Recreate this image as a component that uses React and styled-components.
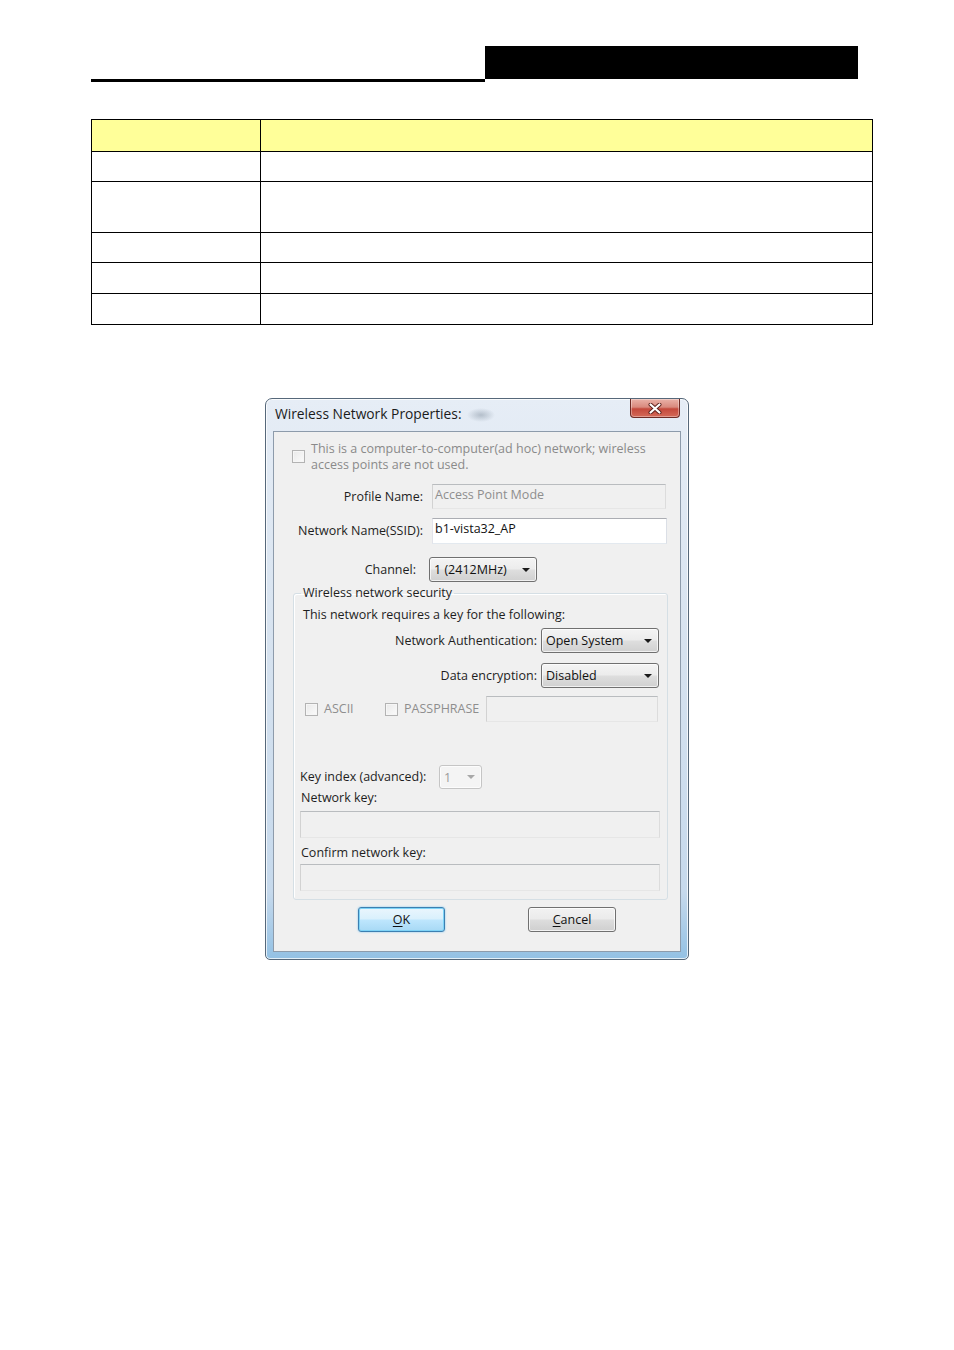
import React from 'react';
import styled, { createGlobalStyle } from 'styled-components';

const GlobalStyle = createGlobalStyle`
  html, body {
    margin: 0;
    padding: 0;
    background: #fff;
  }
  body {
    font-family: "Open Sans", "Noto Sans", "DejaVu Sans", sans-serif;
  }
`;

const Page = styled.div`
  width: 954px;
  height: 1350px;
  padding-top: 46px;
  box-sizing: border-box;
  overflow: hidden;
`;

const Header = styled.div`
  display: flex;
  margin-left: 91px;
`;

const HeaderRule = styled.div`
  width: 394px;
  height: 33px;
  border-bottom: 3px solid #000;
`;

const HeaderTab = styled.div`
  width: 373px;
  height: 33px;
  background: #000;
`;

const Table = styled.div`
  display: grid;
  grid-template-columns: 169px 612px;
  width: 782px;
  margin: 37px 0 0 91px;
  border-top: 1px solid #000;
  border-left: 1px solid #000;
  box-sizing: border-box;
`;

const Cell = styled.div`
  height: ${p => p.$h}px;
  box-sizing: border-box;
  border-right: 1px solid #000;
  border-bottom: 1px solid #000;
  background: ${p => (p.$head ? '#ffff99' : '#fff')};
`;

const Window = styled.div`
  width: 424px;
  height: 562px;
  margin: 73px 0 0 265px;
  box-sizing: border-box;
  border: 1px solid #56687a;
  border-radius: 7px 7px 5px 5px;
  padding: 0 7px 7px;
  background: linear-gradient(180deg, #e6edf6 0%, #d6e2ef 45%, #c6d9ec 88%, #93c1e4 100%);
  box-shadow: inset 0 0 0 1px rgba(255, 255, 255, 0.75);
  display: flex;
  flex-direction: column;
`;

const TitleBar = styled.div`
  height: 32px;
  display: flex;
  justify-content: space-between;
  align-items: flex-start;
  background: radial-gradient(ellipse 14px 7px at 208px 16px, rgba(120, 135, 150, 0.45), rgba(120, 135, 150, 0));
`;

const Title = styled.div`
  margin: 6px 0 0 2px;
  font-size: 13.8px;
  line-height: 18px;
  color: #1b1b1b;
`;

const CloseButton = styled.div`
  width: 50px;
  height: 19px;
  margin-right: 1px;
  box-sizing: border-box;
  border: 1px solid #6e2b25;
  border-top: none;
  border-radius: 0 0 4px 4px;
  background: linear-gradient(180deg, #eab2a8 0%, #d98a7e 45%, #c4493c 55%, #d46a58 100%);
  box-shadow: inset 0 0 0 1px rgba(255, 255, 255, 0.35);
  display: flex;
  align-items: center;
  justify-content: center;
`;

const Client = styled.div`
  height: 521px;
  box-sizing: border-box;
  border: 1px solid #8d9bab;
  background: #f0f0f0;
  display: flex;
  flex-direction: column;
  font-size: 12.5px;
  line-height: 16px;
  color: #1e1e1e;
`;

const AdhocRow = styled.div`
  display: flex;
  margin: 9px 0 0 18px;
  color: #8a8a8a;
`;

const Check = styled.span`
  flex: none;
  width: 13px;
  height: 13px;
  margin: ${p => p.$top || 0}px 6px 0 0;
  box-sizing: border-box;
  border: 1px solid #b3b3b3;
  background: linear-gradient(135deg, #e9e9e9, #fbfbfb);
  box-shadow: inset 0 0 0 1px #f6f6f6;
`;

const FieldRow = styled.div`
  display: flex;
  align-items: center;
  margin-top: ${p => p.$top}px;
`;

const Label = styled.span`
  flex: none;
  width: ${p => p.$w}px;
  margin-right: ${p => p.$gap}px;
  text-align: ${p => p.$align || 'right'};
  white-space: nowrap;
`;

const TextBox = styled.div`
  flex: none;
  width: ${p => p.$w}px;
  height: ${p => p.$h}px;
  margin: ${p => p.$top || 0}px 0 0 ${p => p.$left || 0}px;
  box-sizing: border-box;
  padding: 2px 0 0 2px;
  border: 1px solid;
  border-color: ${p => (p.$disabled ? '#b9bcbf #dcdcdc #e6e6e6 #d2d2d2' : '#abadb3 #dbdfe6 #e3e9ef #e2e3ea')};
  background: ${p => (p.$disabled ? '#f0f0f0' : '#fff')};
  color: ${p => (p.$disabled ? '#8e8e8e' : '#111')};
  white-space: nowrap;
`;

const Combo = styled.div`
  flex: none;
  position: relative;
  width: ${p => p.$w}px;
  height: ${p => p.$h || 25}px;
  box-sizing: border-box;
  padding: 1px 0 0 4px;
  border: 1px solid ${p => (p.$disabled ? '#c5c5c5' : '#707070')};
  border-radius: 3px;
  background: ${p =>
    p.$disabled
      ? '#f4f4f4'
      : 'linear-gradient(180deg, #f4f4f4 0%, #ececec 48%, #dedede 52%, #d0d0d0 100%)'};
  box-shadow: inset 0 0 0 1px rgba(255, 255, 255, 0.7);
  color: ${p => (p.$disabled ? '#9a9a9a' : '#111')};
  display: flex;
  align-items: center;
  white-space: nowrap;
`;

const Arrow = styled.span`
  position: absolute;
  right: 6px;
  top: 50%;
  margin-top: -2px;
  width: 0;
  height: 0;
  border-left: 4px solid transparent;
  border-right: 4px solid transparent;
  border-top: 4px solid ${p => (p.$disabled ? '#a8a8a8' : '#1a1a1a')};
`;

const GroupBox = styled.fieldset`
  width: 375px;
  margin: 3px 0 0 19px;
  padding: 0 0 8px;
  box-sizing: border-box;
  border: 1px solid #d5dfe5;
  border-radius: 3px;
  box-shadow: inset 1px 1px 0 #fff;
  display: flex;
  flex-direction: column;
  min-width: 0;
`;

const Legend = styled.legend`
  margin-left: 7px;
  padding: 0 2px;
  line-height: 16px;
`;

const Line = styled.div`
  margin: ${p => p.$top}px 0 0 ${p => p.$left}px;
  white-space: nowrap;
`;

const RightRow = styled.div`
  display: flex;
  align-items: center;
  justify-content: flex-end;
  padding-right: 8px;
  margin-top: ${p => p.$top}px;
`;

const RightLabel = styled.span`
  margin-right: 4px;
`;

const KeyRow = styled.div`
  display: flex;
  align-items: center;
  margin: 8px 0 0 11px;
  color: #8e8e8e;
`;

const CheckLabel = styled.span`
  flex: none;
  width: ${p => p.$w}px;
  white-space: nowrap;
`;

const IndexRow = styled.div`
  display: flex;
  align-items: center;
  margin: 43px 0 0 6px;
`;

const ButtonRow = styled.div`
  display: flex;
  gap: 83px;
  margin: 7px 0 0 84px;
`;

const Button = styled.div`
  width: ${p => p.$w}px;
  height: 25px;
  box-sizing: border-box;
  border: 1px solid ${p => (p.$primary ? '#3c7fb1' : '#707070')};
  border-radius: 3px;
  background: ${p =>
    p.$primary
      ? 'linear-gradient(180deg, #eaf6fd 0%, #d9f0fc 48%, #bee6fd 52%, #a7d9f5 100%)'
      : 'linear-gradient(180deg, #f2f2f2 0%, #ebebeb 48%, #dddddd 52%, #cfcfcf 100%)'};
  box-shadow: ${p =>
    p.$primary ? 'inset 0 0 0 1px #7ed3f7, 0 0 2px #6ec3f0' : 'inset 0 0 0 1px rgba(255,255,255,0.75)'};
  display: flex;
  align-items: center;
  justify-content: center;
  color: #111;

  u {
    text-decoration: underline;
    text-underline-offset: 2px;
  }
`;

const CloseGlyph = () => (
  <svg width="14" height="11" viewBox="0 0 14 11">
    <path d="M2.5 1.5 L11.5 9.5 M11.5 1.5 L2.5 9.5" stroke="#5a1f1a" strokeWidth="4" strokeLinecap="round" />
    <path d="M2.5 1.5 L11.5 9.5 M11.5 1.5 L2.5 9.5" stroke="#fff" strokeWidth="2.2" strokeLinecap="round" />
  </svg>
);

const rowHeights = [32, 30, 51, 30, 31, 31];

export default function App() {
  return (
    <Page>
      <GlobalStyle />
      <Header>
        <HeaderRule />
        <HeaderTab />
      </Header>

      <Table>
        {rowHeights.map((h, i) => (
          <React.Fragment key={i}>
            <Cell $h={h} $head={i === 0} />
            <Cell $h={h} $head={i === 0} />
          </React.Fragment>
        ))}
      </Table>

      <Window>
        <TitleBar>
          <Title>Wireless Network Properties:</Title>
          <CloseButton>
            <CloseGlyph />
          </CloseButton>
        </TitleBar>

        <Client>
          <AdhocRow>
            <Check $top={9} />
            <div>
              This is a computer-to-computer(ad hoc) network; wireless
              <br />
              access points are not used.
            </div>
          </AdhocRow>

          <FieldRow $top={11}>
            <Label $w={149} $gap={9}>Profile Name:</Label>
            <TextBox $w={234} $h={25} $disabled>Access Point Mode</TextBox>
          </FieldRow>

          <FieldRow $top={9}>
            <Label $w={149} $gap={9}>Network Name(SSID):</Label>
            <TextBox $w={235} $h={26}>b1-vista32_AP</TextBox>
          </FieldRow>

          <FieldRow $top={13}>
            <Label $w={142} $gap={13}>Channel:</Label>
            <Combo $w={108}>
              1 (2412MHz)
              <Arrow />
            </Combo>
          </FieldRow>

          <GroupBox>
            <Legend>Wireless network security</Legend>
            <Line $top={6} $left={9}>This network requires a key for the following:</Line>

            <RightRow $top={5}>
              <RightLabel>Network Authentication:</RightLabel>
              <Combo $w={118}>
                Open System
                <Arrow />
              </Combo>
            </RightRow>

            <RightRow $top={10}>
              <RightLabel>Data encryption:</RightLabel>
              <Combo $w={118}>
                Disabled
                <Arrow />
              </Combo>
            </RightRow>

            <KeyRow>
              <Check />
              <CheckLabel $w={61}>ASCII</CheckLabel>
              <Check />
              <CheckLabel $w={82}>PASSPHRASE</CheckLabel>
              <TextBox $w={172} $h={26} $disabled />
            </KeyRow>

            <IndexRow>
              <Label $w={133} $gap={6} $align="left">Key index (advanced):</Label>
              <Combo $w={43} $h={24} $disabled>
                1
                <Arrow $disabled />
              </Combo>
            </IndexRow>

            <Line $top={1} $left={7}>Network key:</Line>
            <TextBox $w={360} $h={27} $top={5} $left={6} $disabled />

            <Line $top={7} $left={7}>Confirm network key:</Line>
            <TextBox $w={360} $h={27} $top={3} $left={6} $disabled />
          </GroupBox>

          <ButtonRow>
            <Button $w={87} $primary>
              <span><u>O</u>K</span>
            </Button>
            <Button $w={88}>
              <span><u>C</u>ancel</span>
            </Button>
          </ButtonRow>
        </Client>
      </Window>
    </Page>
  );
}
